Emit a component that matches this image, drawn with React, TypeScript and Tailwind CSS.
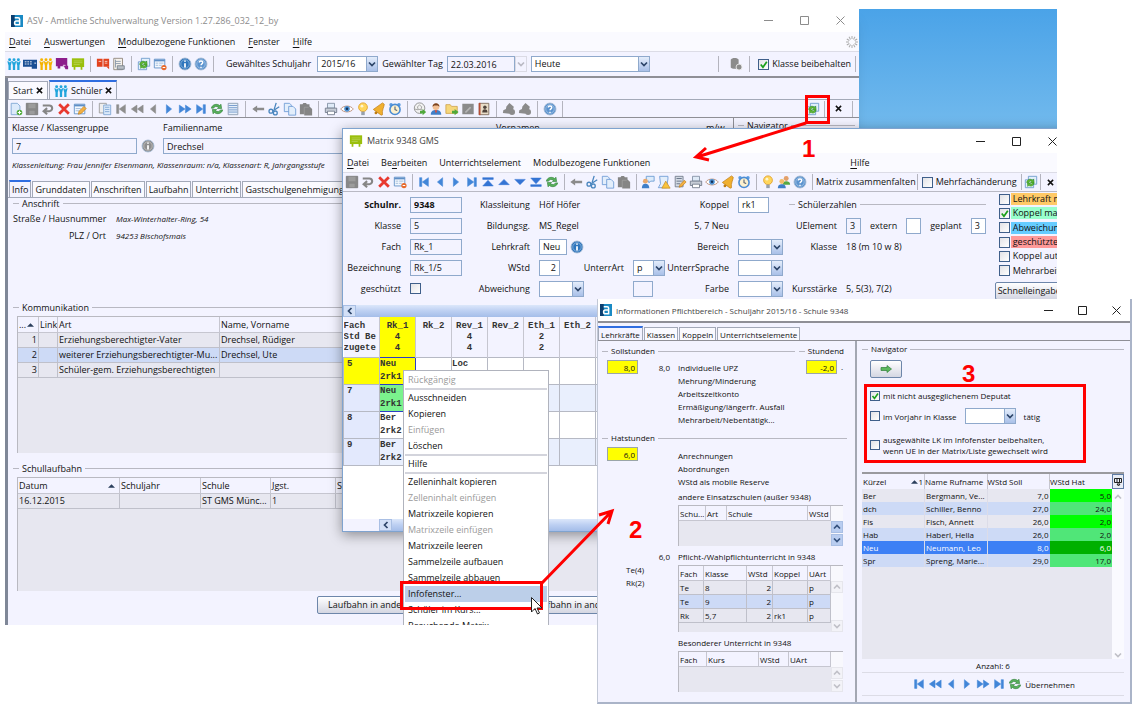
import React from 'react';
import clsx from 'clsx';

/* ---------- Icons ---------- */

const BLUE = '#4286d8';
const OFF = '#8e8e8e';

const people = (c: string) => (
  <g fill={c}>
    {[3, 8, 13].map((x) => (
      <g key={x}>
        <circle cx={x} cy="3.200" r="1.700" />
        <path d={`M${x - 2.6} 4.800l1.200 0 .8 1.200h1.200l.8-1.200 1.200 0-1.300 5v5h-2.600v-5z`} />
      </g>
    ))}
  </g>
);

const board = (c: string) => (
  <g>
    <path d="M1 1.500h14v10H1z" fill={c} />
    <path d="M3 4.500h10M3 6.500h10M3 8.500h7" stroke="#fff" strokeOpacity=".35" strokeWidth=".8" />
    <path d="M3 11h2v3.500H3zM11 11h2v3.500h-2z" fill={c} />
  </g>
);

const tri = (c: string, d: string) => <path d={d} fill={c} stroke={c} strokeWidth=".6" strokeLinejoin="round" />;

const round = (c: string, t: React.ReactNode) => (
  <g>
    <circle cx="8" cy="8" r="6.8" fill={c} stroke="#9fb6d0" strokeWidth="1" />
    <circle cx="8" cy="8" r="4.8" fill="none" stroke="#fff" strokeOpacity=".6" strokeWidth=".7" />
    {t}
  </g>
);

const iMark = <path d="M8 4v1.500M8 7v5" stroke="#fff" strokeWidth="2" />;
const qMark = <path d="M6 6.400C6 4 10 4 10 6.400 10 7.800 8 8 8 9.500M8 11v1.500" stroke="#fff" strokeWidth="1.600" fill="none" />;

const page = (c = '#dceafb', s = '#7ea6d4') => <path d="M2.500 1.500h7l3 3v10h-10z" fill={c} stroke={s} />;

const ICONS: Record<string, React.ReactNode> = {
  pupils: people('#22a5dc'),
  teachers: people('#f5b400'),
  rooms: (
    <g>
      <path d="M0 3h16v8H0zM10 11h6v2.500h-6z" fill="#1a4f94" />
      <path d="M2 5.500h9M2 8h9" stroke="#fff" strokeDasharray="2 1" />
      <path d="M13 7h2" stroke="#fff" />
    </g>
  ),
  courses: (
    <g>
      <path d="M1 1h13v9.500H1zM3 10h3v3H3zM10 10h5v4h-3z" fill="#8c1d8c" />
      <path d="M9 9.500h3" stroke="#fff" strokeWidth=".9" />
    </g>
  ),
  matrix: board('#9abf0c'),
  books: (
    <g>
      <path d="M1 2h6.500v9H1zM8.500 2H15v9H8.500z" fill="#e2431e" />
      <path d="M10 5h3M10 7h3M3 5h3" stroke="#fff" strokeWidth=".8" />
      <path d="M12 11l3 3v-3z" fill="#e2431e" />
    </g>
  ),
  report: (
    <g>
      <path d="M2 1.500h10v13H2z" fill="#f6f2ec" stroke="#8e857a" />
      <path d="M4 5h6M4 7.500h6M4 3v9" stroke="#8796a8" />
      <path d="M6 10h8v4H6z" fill="#b9bfc6" stroke="#76808a" />
    </g>
  ),
  sync: (
    <g>
      <path d="M5 1.500h9.500v9H5z" fill="#e2effb" stroke="#6d9acb" />
      <path d="M1.500 5.500H11v9H1.500z" fill="#e2effb" stroke="#6d9acb" />
      <path d="M3 8.500C4 4.500 7.500 4 9.500 6L11 4.500l.5 4.500H7.500L9 7.500C7.500 6.300 6 7 5.500 8.500z" fill="#62b832" stroke="#2f8f1d" strokeWidth=".7" />
      <path d="M11.500 9.500c-.5 3-4 4-6 2.200L4.300 13 4 9h3.500L6.500 10.300C8 11 9 10.500 9.500 9.500z" fill="#62b832" stroke="#2f8f1d" strokeWidth=".7" />
    </g>
  ),
  winRemove: (
    <g>
      <path d="M1.500 2.500h12v10h-12z" fill="#f3f8fe" stroke="#5f8fc6" />
      <path d="M1.500 3h12v2h-12z" fill="#5f8fc6" />
      <path d="M3 7h3M7 7h5M3 9.500h3M7 9.500h3" stroke="#9bb8d8" />
      <circle cx="12.500" cy="12" r="3" fill="#e86a2c" />
      <path d="M11 12h3" stroke="#fff" strokeWidth="1.200" />
    </g>
  ),
  info: round('#2f76bd', iMark),
  help: round('#5b93cf', qMark),
  infoOff: round('#8e8e8e', iMark),
  newDoc: (
    <g>
      {page()}
      <circle cx="12" cy="12" r="3.200" fill="#52ad3b" />
      <path d="M12 10v4M10 12h4" stroke="#fff" strokeWidth="1.200" />
    </g>
  ),
  save: (
    <g>
      <path d="M1.500 1.500h13v13h-13z" fill="#888" stroke="#7a7a7a" />
      <path d="M4 2h8v5H4zM5 10h6v4H5z" fill="#9c9c9c" />
    </g>
  ),
  undo: <path d="M2 4h7.500a3 3 0 0 1 0 6.500H4M7 7l-4 3.500L7 14" fill="none" stroke="#868686" strokeWidth="2.400" />,
  remove: <path d="M2.500 2.500l11 11M13.500 2.500l-11 11" stroke="#e8392f" strokeWidth="3.200" />,
  edit: (
    <g>
      <path d="M1.500 2.500h12v11h-12z" fill="#f3f8fe" stroke="#5f8fc6" />
      <path d="M1.500 3h12v2h-12z" fill="#5f8fc6" />
      <path d="M3 7.500h6M3 10h4" stroke="#9bb8d8" />
      <path d="M6 14l1-3.500L12.500 5 15 7.500 9.500 13z" fill="#f4b043" stroke="#c17f1c" strokeWidth=".8" />
    </g>
  ),
  sheets: (
    <g>
      <path d="M1.500 1.500h8v11h-8z" fill="#eee" stroke="#999" />
      <path d="M6.500 3.500h8v11h-8z" fill="#dceafa" stroke="#7ea6d4" />
      <path d="M8 6h5M8 8.500h5M8 11h5" stroke="#7ea6d4" />
    </g>
  ),
  first: tri(BLUE, 'M3 3h2.500v10H3zM13 3v10L6 8z'),
  firstOff: tri(OFF, 'M3 3h2.500v10H3zM13 3v10L6 8z'),
  rewind: tri(BLUE, 'M8 3.500v9L1.500 8zM15 3.500v9L8.500 8z'),
  rewindOff: tri(OFF, 'M8 3.500v9L1.500 8zM15 3.500v9L8.500 8z'),
  prev: tri(BLUE, 'M11 3v10L5 8z'),
  prevOff: tri(OFF, 'M11 3v10L5 8z'),
  next: tri(BLUE, 'M5 3v10l6-5z'),
  forward: tri(BLUE, 'M1.500 3.500v9L8 8zM8.500 3.500v9L15 8z'),
  last: tri(BLUE, 'M10.500 3H13v10h-2.500zM3 3v10l7-5z'),
  top: tri('#3474d4', 'M2 3h12v2H2zM2 12.500h12L8 6z'),
  up: tri('#3474d4', 'M2 11h12L8 5z'),
  down: tri('#3474d4', 'M2 5h12l-6 6z'),
  bottom: tri('#3474d4', 'M2 11h12v2H2zM2 3.500h12L8 10z'),
  refresh: (
    <g fill="#57b05a" stroke="#2f7f3a" strokeWidth=".7">
      <path d="M1.500 7C2.500 2.500 8 1.500 11 4l1.500-1.500.8 5H8.500l1.200-1.600C7.500 4.500 5 5 4 7z" />
      <path d="M14.500 9c-1 4.500-6.500 5.500-9.500 3l-1.500 1.500-.8-5h4.800L6.300 10.100C8.500 11.500 11 11 12 9z" />
    </g>
  ),
  list: (
    <g>
      <path d="M2.500 1.500h11v13h-11z" fill="#e6effa" stroke="#8a9bb0" />
      <path d="M3 4h10M3 6.500h10M3 9h10M3 11.500h10" stroke="#6c94c8" />
    </g>
  ),
  back: <path d="M15 6.500H7V4L1.500 8 7 12V9.500h8z" fill="#8b8b8b" />,
  cut: (
    <g fill="none" stroke="#4a86bf" strokeWidth="1.500">
      <path d="M10.500 1L8 9M14 5.500L7 10" />
      <circle cx="4.500" cy="10.500" r="2.200" />
      <circle cx="9.500" cy="12.500" r="2.200" />
    </g>
  ),
  copy: (
    <g fill="#e3eefb" stroke="#6f9cd6">
      <path d="M1.500 1.500h6l2 2v7.500h-8z" />
      <path d="M6.500 5h5l3 3v7h-8z" />
    </g>
  ),
  paste: (
    <g fill="#858585">
      <path d="M1 2.500h3L5 1h3l1 1.500h3V5l3 3v7.500H6V14H1z" />
      <path d="M6 14V6h5" fill="none" stroke="#a8a8a8" strokeWidth=".7" />
    </g>
  ),
  print: (
    <g>
      <path d="M4 1.500h8V7H4z" fill="#dfeaf7" stroke="#8291a5" />
      <path d="M1.500 7h13v5h-13z" fill="#c6ccd6" stroke="#727c8c" />
      <path d="M4 10.500h8v4H4z" fill="#fff" stroke="#727c8c" />
    </g>
  ),
  eye: (
    <g>
      <path d="M.8 8C4 3.500 12 3.500 15.200 8 12 12.500 4 12.500.8 8z" fill="#fff" stroke="#b98a74" />
      <circle cx="8" cy="7.800" r="3.200" fill="#4b8fd0" />
      <circle cx="8" cy="7.800" r="1.400" fill="#132f55" />
    </g>
  ),
  bulb: (
    <g>
      <circle cx="8" cy="6" r="5" fill="#ffd65c" stroke="#e0a02a" />
      <circle cx="6.800" cy="4.800" r="1.600" fill="#fff6cf" />
      <path d="M6 11h4v4H6z" fill="#97a0ab" />
    </g>
  ),
  bell: (
    <g>
      <path d="M12 1L1.500 8.500 3.500 10l7 5 1.500-.5c-1-5 2-9 2-12z" fill="#f0b030" stroke="#c07d12" strokeWidth=".8" />
      <circle cx="4.500" cy="12.500" r="1.600" fill="#c07d12" />
    </g>
  ),
  clock: (
    <g>
      <circle cx="3.500" cy="3" r="2" fill="#5a9be0" />
      <circle cx="12.500" cy="3" r="2" fill="#5a9be0" />
      <circle cx="8" cy="8.500" r="5.800" fill="#fdf1ce" stroke="#4b8cd4" strokeWidth="1.800" />
      <path d="M8 5v3.700l2.500 1" stroke="#4d5b70" fill="none" strokeWidth="1.200" />
    </g>
  ),
  ball: (
    <g>
      <circle cx="7.500" cy="7" r="6" fill="#f2f2f2" stroke="#8b8b8b" />
      <path d="M5 5.500l2.500-2 2.500 2-1 3H6zM2 8l4 1M9 8.500l3 1.500" fill="none" stroke="#9b9b9b" />
      <path d="M8 10h3V8l4 3.500-4 3.500v-2H8z" fill="#4fa93a" />
    </g>
  ),
  user: (
    <g>
      <path d="M2 14.500c0-4 2.500-5.500 6-5.500s6 1.500 6 5.500z" fill="#3f7fc8" />
      <path d="M6.500 9.500h3L8 13z" fill="#e24b35" />
      <circle cx="8" cy="5.500" r="3.800" fill="#f2bf94" />
      <path d="M4 5.500C4 0 12 0 12 5.500L10 4H6z" fill="#7b4320" />
    </g>
  ),
  users: (
    <g>
      <circle cx="10.500" cy="4" r="2.800" fill="#e3a06a" />
      <path d="M6.500 11c0-3 1.500-4 4-4s4.500 1 4.500 4z" fill="#55a843" />
      <circle cx="5.500" cy="7.500" r="2.800" fill="#f2bf6c" />
      <path d="M1 15c0-3.500 2-4.500 4.500-4.500S10 11.500 10 15z" fill="#3f7fc8" />
    </g>
  ),
  folder: (
    <g>
      <path d="M1 3h5l1.500 2H14v8H1z" fill="#f6d77c" stroke="#c9983a" strokeWidth=".8" />
      <path d="M8 10h3V8l4.500 3.500L11 15v-2H8z" fill="#4fa93a" />
    </g>
  ),
  editOff: (
    <g>
      <path d="M1.500 2h13v12h-13z" fill="#8b8b8b" />
      <path d="M5 12l6-6" stroke="#b5b5b5" strokeWidth="2" />
    </g>
  ),
  address: (
    <g>
      <path d="M2.500 1.500h11v13h-11z" fill="#e9ddc8" stroke="#7d6a5a" />
      <path d="M2 1h2v14H2z" fill="#b54d35" />
      <circle cx="9" cy="6" r="2" fill="#50443c" />
      <path d="M6 12c0-3 1-3.800 3-3.800s3 .8 3 3.800z" fill="#50443c" />
    </g>
  ),
  tagOff: (
    <g fill="#8b8b8b">
      <path d="M8.500 1l5 4.500-1 3.500-4 4.500L1 12.500l.5-3 3-1.500.5-3z" />
      <circle cx="11.500" cy="11.500" r="3.400" />
    </g>
  ),
  dbOff: (
    <g fill="#8b8b8b">
      <path d="M2 3c1-2.500 8-2.500 9 0v9c-1 2-8 2-9 0z" />
      <circle cx="11.500" cy="11.500" r="3.400" stroke="#eee" />
    </g>
  ),
  note: (
    <g>
      <path d="M6 1.500h9v5.500h-4l-2 2V7H6z" fill="#dcebfb" stroke="#6b9bd2" />
      <circle cx="5" cy="7" r="2.800" fill="#e9a86b" />
      <path d="M1 15c0-3.500 1.500-5 4-5s4.500 1.500 4.500 5z" fill="#3f7fc8" />
    </g>
  ),
  warn: (
    <g>
      <path d="M3 1.500h9.500v3L11 14.500H1.500L4 10z" fill="#e3eefb" stroke="#6f9cd6" />
      <path d="M10 7l5 8H5.500z" fill="#f9c33c" stroke="#c58a1a" strokeWidth=".8" />
    </g>
  ),
  calc: (
    <g>
      <path d="M2.500 1.500h9v12h-9z" fill="#d3dae4" stroke="#727c8c" />
      <path d="M4 4h6M4 7h6M4 10h4" stroke="#5f6c80" />
      <path d="M7 14l1-3 5-5 2 2-5 5z" fill="#f4b043" stroke="#c17f1c" strokeWidth=".8" />
    </g>
  ),
};

const Icon = ({ name, className = 'size-3.5' }: { name: string; className?: string }) => (
  <svg viewBox="0 0 16 16" className={clsx('shrink-0', className)} aria-hidden="true">
    {ICONS[name]}
  </svg>
);

const Logo = () => (
  <svg viewBox="0 0 16 16" className="size-3 shrink-0" aria-hidden="true">
    <path d="M0 0h16v16H0z" fill="#1a8ac4" />
    <path d="M0 0h5v16H0z" fill="#0c3f70" />
    <path d="M5 3.500h4.500c1.500 0 2 .8 2 2V13H7.200C5.500 13 4.800 12 4.800 10.500S5.500 8 7.200 8h4" fill="none" stroke="#fff" strokeWidth="2" />
  </svg>
);

const Chevron = ({ dir = 'down' }: { dir?: 'down' | 'up' | 'left' }) => (
  <svg viewBox="0 0 8 8" className="size-2" aria-hidden="true">
    <path
      d={{ down: 'M1 2.500l3 3 3-3', up: 'M1 5.500l3-3 3 3', left: 'M5.500 1l-3 3 3 3' }[dir]}
      fill="none"
      stroke="currentColor"
      strokeWidth="1.700"
    />
  </svg>
);

/* ---------- Building blocks ---------- */

const Sep = () => <span className="h-4 w-px shrink-0 bg-[#b4b4be]" />;

const ToolIcons = ({ items, sep = 'w-[9px]' }: { items: string; sep?: string }) => (
  <>
    {items.split(' ').map((name, i) =>
      name === '|' ? (
        <span key={i} className={clsx('flex shrink-0 justify-center', sep)}>
          <Sep />
        </span>
      ) : (
        <button key={i} type="button" aria-label={name} className="flex w-4 shrink-0 justify-center">
          <Icon name={name} />
        </button>
      )
    )}
  </>
);

const WindowButtons = ({ className = '', gap = 'gap-[27px]' }: { className?: string; gap?: string }) => (
  <div className={clsx('ml-auto flex items-center', gap, className)}>
    {['M0 4.500h9', 'M.5 .5h8v8h-8z', 'M.5 .5l8 8M8.500 .5l-8 8'].map((d, i) => (
      <button key={d} type="button" aria-label={['Minimieren', 'Maximieren', 'Schließen'][i]}>
        <svg viewBox="0 0 9 9" className="size-[9px] overflow-visible" fill="none" stroke="currentColor">
          <path d={d} />
        </svg>
      </button>
    ))}
  </div>
);

// the underlined letter is the keyboard mnemonic
const MenuItem = ({ text, at = 0, className = '' }: { text: string; at?: number; className?: string }) => (
  <button type="button" className={className}>
    {at < 0 ? text : (
      <>
        {text.slice(0, at)}
        <span className="underline underline-offset-2">{text[at]}</span>
        {text.slice(at + 1)}
      </>
    )}
  </button>
);

const Legend = ({ text, className = '' }: { text: string; className?: string }) => (
  <div className={clsx('flex h-2.5 items-center gap-[3px] leading-none', className)}>
    <span className="h-px w-[6px] bg-[#b8b8c2]" />
    <span>{text}</span>
    <span className="h-px flex-1 bg-[#b8b8c2]" />
  </div>
);

const Field = ({ id, label, value = '', className = '' }: { id?: string; label?: string; value?: string; className?: string }) => (
  <input
    id={id}
    aria-label={label}
    defaultValue={value}
    className={clsx('h-4 border border-[#8fa9cc] px-[3px] outline-none', className)}
  />
);

const Combo = ({
  id, label, value = '', className = '',
}: { id?: string; label?: string; value?: string; className?: string }) => (
  <div className={clsx('relative h-4 shrink-0', className)}>
    <select id={id} aria-label={label} className="h-full w-full appearance-none border border-[#8fa9cc] bg-white pl-[3px] outline-none">
      <option>{value}</option>
    </select>
    <span className="pointer-events-none absolute inset-y-0 right-0 flex w-3 items-center justify-center border border-[#8fa9cc] bg-linear-to-b from-[#e4edfb] to-[#a9c0e8] text-[#2c4468]">
      <Chevron />
    </span>
  </div>
);

const Check = ({
  label, checked = false, className = '', box = 'size-[11px]', textClass = '',
}: { label: React.ReactNode; checked?: boolean; className?: string; box?: string; textClass?: string }) => (
  <label className={clsx('flex items-center whitespace-nowrap', className)}>
    <span className={clsx('relative shrink-0', box)}>
      <input
        type="checkbox"
        defaultChecked={checked}
        className="peer block size-full appearance-none border border-[#3f5f8a] bg-linear-to-br from-[#e2e2e6] to-white"
      />
      <svg viewBox="0 0 10 10" className="pointer-events-none absolute inset-0 size-full opacity-0 peer-checked:opacity-100" aria-hidden="true">
        <path d="M2.500 5l2 2.500 3.500-5" fill="none" stroke="#1ca01c" strokeWidth="1.600" />
      </svg>
    </span>
    <span className={textClass}>{label}</span>
  </label>
);

const Tab = ({ text, active = false, icon, close = false }: { text: string; active?: boolean; icon?: string; close?: boolean }) => (
  <button
    type="button"
    role="tab"
    aria-selected={active}
    className={clsx(
      'flex shrink-0 items-center gap-[3px] self-stretch border border-b-0 border-[#a3a9b8] whitespace-nowrap',
      close ? 'px-1' : 'px-0.5',
      active ? 'border-t-2 border-t-[#2f6de0] bg-[#f3f3ff]' : 'mt-px bg-[#fafaff]'
    )}
  >
    {icon && <Icon name={icon} />}
    {text}
    {close && (
      <svg viewBox="0 0 8 8" className="size-[7px]" aria-hidden="true">
        <path d="M1 1l6 6M7 1L1 7" stroke="#111" strokeWidth="1.700" />
      </svg>
    )}
  </button>
);

const Cross = () => (
  <button type="button" aria-label="Schließen">
    <svg viewBox="0 0 8 8" className="size-[7px]">
      <path d="M1 1l6 6M7 1L1 7" stroke="#111" strokeWidth="1.700" />
    </svg>
  </button>
);

const SortMark = () => (
  <svg viewBox="0 0 8 4" className="h-1 w-[7px]" aria-hidden="true">
    <path d="M0 4l4-4 4 4z" fill="#2b3f5c" />
  </svg>
);

interface GridColumn {
  title: React.ReactNode;
  width: string;
  right?: boolean;
}

interface DataGridProps {
  columns: GridColumn[];
  rows: string[][];
  rowHeight: string;
  headHeight: string;
  className?: string;
  scroll?: 'blue' | 'off';
}

const DataGrid = ({ columns, rows, rowHeight, headHeight, className = '', scroll }: DataGridProps) => (
  <div className={clsx('flex border-t border-l border-[#b9b9c1] bg-[#e7e7f0]', className)}>
    <div className="min-w-0 flex-1">
      <table className="w-full table-fixed border-separate border-spacing-0">
        <thead>
          <tr className={clsx('bg-[#f3f3ff]', headHeight)}>
            {columns.map((c, i) => (
              <th key={i} className={clsx('overflow-hidden border-r border-b border-[#c6c6d0] pl-px text-left font-normal whitespace-nowrap', c.width)}>
                {c.title}
              </th>
            ))}
          </tr>
        </thead>
        <tbody>
          {rows.map((row, r) => (
            <tr key={r} className={clsx(rowHeight, r % 2 ? 'bg-[#cddaf6]' : 'bg-[#e7e7f0]')}>
              {row.map((cell, i) => (
                <td key={i} className={clsx('overflow-hidden border-r border-b border-[#bfc0ca] px-px whitespace-nowrap', columns[i].right && 'text-right')}>
                  {cell}
                </td>
              ))}
            </tr>
          ))}
        </tbody>
      </table>
    </div>
    {scroll && (
      <div className={clsx('flex w-3 shrink-0 flex-col justify-between bg-[#f8f8fd] pt-[15px]', scroll === 'off' ? 'text-[#c0c0c8]' : 'text-[#33507c]')}>
        {(['up', 'down'] as const).map((dir) => (
          <button
            key={dir}
            type="button"
            aria-label={dir}
            className={clsx('flex h-3 items-center justify-center border', scroll === 'off' ? 'border-[#e6e6ec] bg-[#f3f3f8]' : 'border-[#a9bfe4] bg-[#b9cdf0]')}
          >
            <Chevron dir={dir} />
          </button>
        ))}
      </div>
    )}
  </div>
);

/* ---------- Main window ---------- */

const contacts = [
  ['1', '', 'Erziehungsberechtigter-Vater', 'Drechsel, Rüdiger'],
  ['2', '', 'weiterer Erziehungsberechtigter-Mu...', 'Drechsel, Ute'],
  ['3', '', 'Schüler-gem. Erziehungsberechtigten', ''],
];

const raised = 'rounded-[2px] border border-[#6d86aa] bg-linear-to-b from-white to-[#d4d6e2] whitespace-nowrap';

const MainWindow = () => (
  <section className="absolute inset-y-0 left-0 flex w-[854px] flex-col bg-[#f3f3ff] shadow-lg">
    <header className="flex h-[23px] items-center gap-1 bg-white pl-1.5 text-[#8c8c8c]">
      <Logo />
      <h1>ASV - Amtliche Schulverwaltung Version 1.27.286_032_12_by</h1>
      <WindowButtons className="pr-3.5" />
    </header>
    <nav className="flex h-[19px] items-center gap-[13px] bg-[#fafaff] pl-1">
      <MenuItem text="Datei" />
      <MenuItem text="Auswertungen" />
      <MenuItem text="Modulbezogene Funktionen" />
      <MenuItem text="Fenster" />
      <MenuItem text="Hilfe" />
      <svg viewBox="0 0 12 12" className="mr-px ml-auto size-3" aria-hidden="true">
        {[0, 30, 60, 90, 120, 150, 180, 210, 240, 270, 300, 330].map((a) => (
          <path key={a} d="M6 0v3" stroke="#aaa" transform={`rotate(${a} 6 6)`} />
        ))}
      </svg>
    </nav>
    <div className="flex h-[27px] items-center border-t border-b-2 border-t-[#dcdce6] border-b-[#8f8f96] pl-px">
      <ToolIcons items="pupils rooms teachers courses matrix | books report | sync winRemove | info help |" />
      <label htmlFor="schuljahr" className="mr-1.5 ml-2">Gewähltes Schuljahr</label>
      <Combo id="schuljahr" value="2015/16" className="w-[61px]" />
      <label htmlFor="tag" className="mx-1">Gewählter Tag</label>
      <Field id="tag" value="22.03.2016" className="w-[68px] bg-[#f3f3ff]" />
      <span className="flex h-4 w-3 items-center justify-center border border-[#dadae4] text-[#b9b9c4]">
        <Chevron />
      </span>
      <Combo label="Tag" value="Heute" className="ml-1 w-[119px]" />
      <div className="ml-auto flex items-center pr-[3px]">
        <Sep />
        <button type="button" aria-label="Datenbank" className="pr-1.5 pl-2.5"><Icon name="dbOff" /></button>
        <Sep />
        <Check label="Klasse beibehalten" checked className="mr-1 ml-2" textClass="ml-[3px]" />
        <Sep />
      </div>
    </div>

    <div className="flex flex-1 flex-col border-l-3 border-[#7f8797]">
      <div role="tablist" className="flex h-[21px] gap-px pt-0.5">
        <Tab text="Start" close />
        <Tab text="Schüler" icon="pupils" close active />
      </div>
      <div className="flex h-[19px] items-center border-y border-t-[#a3a9b8] border-b-[#8f8f96]">
        <ToolIcons items="newDoc save undo remove edit | sheets firstOff rewindOff prevOff next forward last refresh list | back cut copy paste | print eye bulb bell clock | ball user folder editOff address | tagOff tagOff | help |" />
        <div className="ml-auto flex items-center pr-1.5">
          <button type="button" aria-label="Infofenster" className="pr-1"><Icon name="sync" /></button>
          <Sep />
          <span className="flex px-2.5"><Cross /></span>
          <Sep />
        </div>
      </div>

      <div className="flex flex-1 gap-1">
        <div className="min-w-0 flex-1 pt-[3px]">
          <div className="grid grid-cols-[125px_18px_329px_206px_1fr] gap-x-[4px] gap-y-[3px] pl-1">
            <label htmlFor="klasse" className="whitespace-nowrap">Klasse / Klassengruppe</label>
            <span />
            <label htmlFor="familienname">Familienname</label>
            <label htmlFor="vornamen">Vornamen</label>
            <span>m/w</span>
            <Field id="klasse" value="7" className="bg-[#f3f3ff]" />
            <button type="button" aria-label="Info" className="flex items-center">
              <Icon name="infoOff" />
            </button>
            <Field id="familienname" value="Drechsel" className="bg-[#f3f3ff]" />
            <Field id="vornamen" className="bg-[#f3f3ff]" />
          </div>
          <p className="mt-1 h-3.5 pl-1 text-[8px] whitespace-nowrap italic">
            Klassenleitung: Frau Jennifer Eisenmann, Klassenraum: n/a, Klassenart: R, Jahrgangsstufe
          </p>
          <div role="tablist" className="mt-2 flex h-[18px] gap-px border-b border-[#a3a9b8] pl-px">
            <Tab text="Info" active />
            <Tab text="Grunddaten" />
            <Tab text="Anschriften" />
            <Tab text="Laufbahn" />
            <Tab text="Unterricht" />
            <Tab text="Gastschulgenehmigung" />
          </div>

          <div className="px-[5px]">
            <Legend text="Anschrift" />
            <dl className="grid auto-rows-[17px] grid-cols-[93px_1fr] items-center gap-x-2.5 pt-0.5">
              <dt className="text-right whitespace-nowrap">Straße / Hausnummer</dt>
              <dd className="text-[8px] italic">Max-Winterhalter-Ring, 54</dd>
              <dt className="text-right">PLZ / Ort</dt>
              <dd className="text-[8px] italic">94253 Bischofsmais</dd>
            </dl>
            <Legend text="Kommunikation" className="mt-[58px]" />
            <DataGrid
              className="mt-1 ml-1 h-[137px]"
              headHeight="h-4"
              rowHeight="h-[15px]"
              columns={[
                { title: <span className="flex items-center justify-between pr-1">...<SortMark /></span>, width: 'w-[21px]', right: true },
                { title: 'Link', width: 'w-[19px]' },
                { title: 'Art', width: 'w-[162px]' },
                { title: 'Name, Vorname', width: 'w-auto' },
              ]}
              rows={contacts}
            />
            <Legend text="Schullaufbahn" className="mt-2.5" />
            <DataGrid
              className="mt-1 ml-1 h-[114px]"
              headHeight="h-4"
              rowHeight="h-[15px]"
              columns={[
                { title: <span className="flex items-center justify-between pr-1">Datum<SortMark /></span>, width: 'w-[102px]' },
                { title: 'Schuljahr', width: 'w-[81px]' },
                { title: 'Schule', width: 'w-[70px]' },
                { title: 'Jgst.', width: 'w-[65px]' },
                { title: 'Schulart', width: 'w-auto' },
              ]}
              rows={[['16.12.2015', '', 'ST GMS Münc...', '1', '']]}
            />
            <div className="mt-[5px] flex gap-1 pl-[304px]">
              <button type="button" className={clsx(raised, 'h-[18px] w-[200px] pl-2.5 text-left')}>Laufbahn in anderen Schulen</button>
              <button type="button" className={clsx(raised, 'h-[18px] w-[200px] pl-2.5 text-left')}>Laufbahn in anderen Ländern</button>
            </div>
          </div>
        </div>
        <div className="mr-1 w-[122px] border-l border-[#8f8f96] pt-0.5 pl-1">
          <Legend text="Navigator" />
        </div>
      </div>
    </div>
  </section>
);

/* ---------- Matrix window ---------- */

const markers = [
  { label: 'Lehrkraft markieren', color: 'bg-[#ffc966]' },
  { label: 'Koppel markieren', color: 'bg-[#99ffcc]', checked: true },
  { label: 'Abweichung', color: 'bg-[#66ccff]' },
  { label: 'geschützte UE', color: 'bg-[#ff9999]' },
  { label: 'Koppel automatisch', color: '' },
  { label: 'Mehrarbeit', color: '' },
];

const matrixHead = [
  ['Rk_1', '4', '4'], ['Rk_2'], ['Rev_1', '4', '4'], ['Rev_2'], ['Eth_1', '2', '2'], ['Eth_2'], ['Spo'],
];
const matrixRows = [
  { no: '5', cells: [['Neu', '2rk1'], [], ['Loc'], [], [], [], []] },
  { no: '7', cells: [['Neu', '2rk1'], [], [], [], [], [], []] },
  { no: '8', cells: [['Ber', '2rk2'], [], [], [], [], [], []] },
  { no: '9', cells: [['Ber', '2rk2'], [], [], [], [], [], []] },
];

const ScrollRow = ({ className = '' }: { className?: string }) => (
  <div className={clsx('flex h-3 w-full', className)}>
    <button type="button" aria-label="Nach links" className="flex w-[13px] shrink-0 items-center justify-center border border-[#a9bfe4] bg-[#d3e0f7] text-[#2c4468]">
      <Chevron dir="left" />
    </button>
    <span className="flex-1 bg-linear-to-b from-[#dce7fa] via-[#bccff2] to-[#a4bde9]" />
  </div>
);

const FormLabel = ({ htmlFor, children, className = '' }: { htmlFor?: string; children: React.ReactNode; className?: string }) => (
  <label htmlFor={htmlFor} className={clsx('flex justify-end', className)}>{children}</label>
);

const MatrixWindow = () => (
  <section className="absolute top-[119px] left-[337px] flex h-[404px] w-[736px] flex-col border border-[#7fa3cf] bg-[#f3f3ff] whitespace-nowrap shadow-[0_3px_12px_rgba(0,0,0,0.4)]">
    <header className="flex h-6 shrink-0 items-center gap-1 bg-white pl-1.5 text-[#444]">
      <Icon name="matrix" />
      <h2>Matrix 9348 GMS</h2>
      <WindowButtons className="pr-5 text-[#222]" />
    </header>
    <nav className="flex h-[19px] shrink-0 items-center gap-3 bg-[#fafaff] pl-1">
      <MenuItem text="Datei" />
      <MenuItem text="Bearbeiten" at={2} />
      <MenuItem text="Unterrichtselement" at={-1} />
      <MenuItem text="Modulbezogene Funktionen" at={-1} />
      <MenuItem text="Hilfe" className="ml-[188px]" />
    </nav>
    <div className="flex h-5 shrink-0 items-center border-y border-t-[#dcdce6] border-b-[#b9b9c4] pl-px">
      <ToolIcons
        sep="w-[8px]"
        items="save undo remove winRemove | first prev next last top up down bottom refresh | back cut copy paste | note warn calc print eye bell clock | bulb users help |"
      />
      <button type="button" className="pr-px">Matrix zusammenfalten</button>
      <Sep />
      <Check label="Mehrfachänderung" className="mx-1" textClass="ml-[3px]" />
      <Sep />
      <button type="button" aria-label="Infofenster" className="mx-0.5"><Icon name="sync" /></button>
      <Sep />
      <span className="ml-1.5 flex"><Cross /></span>
    </div>

    <div className="flex shrink-0">
      <div className="grid auto-rows-[21px] grid-cols-[58px_52px_59px_36px_40px_32px_55px_45px] items-center gap-x-[9px] pt-0.5">
        <FormLabel htmlFor="schulnr" className="font-bold">Schulnr.</FormLabel>
        <Field id="schulnr" value="9348" className="w-full bg-[#f3f3ff] font-bold" />
        <FormLabel>Klassleitung</FormLabel>
        <span>Höf Höfer</span>
        <span />
        <span />
        <FormLabel htmlFor="koppel">Koppel</FormLabel>
        <Field id="koppel" value="rk1" className="w-[31px] bg-white" />

        <FormLabel htmlFor="m-klasse">Klasse</FormLabel>
        <Field id="m-klasse" value="5" className="w-full bg-[#f3f3ff]" />
        <FormLabel>Bildungsg.</FormLabel>
        <span>MS_Regel</span>
        <span />
        <span />
        <FormLabel>5, 7 Neu</FormLabel>
        <span />

        <FormLabel htmlFor="fach">Fach</FormLabel>
        <Field id="fach" value="Rk_1" className="w-full bg-[#f3f3ff]" />
        <FormLabel htmlFor="lehrkraft">Lehrkraft</FormLabel>
        <div className="flex items-center gap-[3px]">
          <Field id="lehrkraft" value="Neu" className="w-7 shrink-0 bg-white" />
          <Icon name="info" />
        </div>
        <span />
        <span />
        <FormLabel htmlFor="bereich">Bereich</FormLabel>
        <Combo id="bereich" className="w-[45px]" />

        <FormLabel htmlFor="bezeichnung">Bezeichnung</FormLabel>
        <Field id="bezeichnung" value="Rk_1/5" className="w-full bg-[#f3f3ff]" />
        <FormLabel htmlFor="wstd">WStd</FormLabel>
        <Field id="wstd" value="2" className="w-[21px] bg-white text-right" />
        <FormLabel htmlFor="unterrart">UnterrArt</FormLabel>
        <Combo id="unterrart" value="p" className="w-8" />
        <FormLabel htmlFor="sprache">UnterrSprache</FormLabel>
        <Combo id="sprache" className="w-[45px]" />

        <FormLabel htmlFor="geschuetzt">geschützt</FormLabel>
        <input id="geschuetzt" type="checkbox" className="size-[11px] appearance-none border border-[#3f5f8a] bg-linear-to-br from-[#e2e2e6] to-white" />
        <FormLabel htmlFor="abweichung">Abweichung</FormLabel>
        <Combo id="abweichung" className="w-[45px]" />
        <span />
        <Field label="Abweichung Wert" className="w-5 bg-[#f3f3ff]" />
        <FormLabel htmlFor="farbe">Farbe</FormLabel>
        <Combo id="farbe" className="w-[45px]" />
      </div>

      <div className="ml-1.5 grid w-[203px] auto-rows-[21px] items-center pt-0.5">
        <Legend text="Schülerzahlen" />
        <div className="flex items-center gap-[9px]">
          <FormLabel htmlFor="uelement" className="w-12">UElement</FormLabel>
          <Field id="uelement" value="3" className="w-[15px] bg-[#f3f3ff]" />
          <label htmlFor="extern">extern</label>
          <Field id="extern" className="w-[15px] bg-white" />
          <label htmlFor="geplant">geplant</label>
          <Field id="geplant" value="3" className="w-[15px] bg-white" />
        </div>
        <div className="flex gap-[9px]">
          <span className="w-12 text-right">Klasse</span>
          <span>18 (m 10 w 8)</span>
        </div>
        <span />
        <div className="flex gap-[9px]">
          <span className="flex w-12 justify-end">Kursstärke</span>
          <span>5, 5(3), 7(2)</span>
        </div>
      </div>

      <div className="ml-[9px] flex flex-1 flex-col">
        <div className="grid h-[86px] grid-rows-6 pl-1">
          {markers.map((m) => (
            <Check
              key={m.label}
              label={m.label}
              checked={m.checked}
              textClass={clsx('ml-px flex h-3 flex-1 items-center overflow-hidden pl-0.5', m.color)}
            />
          ))}
        </div>
        <button type="button" className={clsx(raised, 'mt-1 h-[18px] pl-0.5 text-left')}>Schnelleingabe</button>
      </div>
    </div>

    <ScrollRow className="mt-[5px] shrink-0" />
    <div className="flex-1 overflow-hidden bg-white">
      <table className="table-fixed border-collapse font-['Liberation_Mono',monospace] text-[9px] font-bold text-[#333]">
        <thead>
          <tr className="h-10 bg-[#f3f3ff] align-top leading-[11px]">
            <th className="w-9 border-r border-[#c6c6d0] text-left">
              <div className="w-[35px] overflow-hidden pt-1">Fach<br />Std Be<br />zugete</div>
            </th>
            {matrixHead.map((col, i) => (
              <th key={i} className={clsx('w-9 border-r border-[#c6c6d0] pt-1', i === 0 && 'bg-[#ffff00]')}>
                {col.map((line, n) => <div key={n} className="w-[35px]">{line}</div>)}
              </th>
            ))}
          </tr>
        </thead>
        <tbody>
          {matrixRows.map((row, r) => (
            <tr key={row.no} className={clsx('h-[27px] align-top leading-[13px]', r % 2 ? 'bg-[#e9effd]' : 'bg-white')}>
              <th className={clsx('border border-[#b6b9c4] pl-[3px] text-left', r === 0 ? 'bg-[#ffff00]' : 'bg-[#e3e9fd]')}>{row.no}</th>
              {row.cells.map((cell, c) => (
                <td
                  key={c}
                  className={clsx(
                    'border border-[#b6b9c4]',
                    c === 0 && r === 0 && 'border-[#2c3fc4]! bg-[#ffff00]',
                    c === 0 && r === 1 && 'border-[#2c3fc4]! bg-[#7bf28d]'
                  )}
                >
                  {cell.map((line) => <div key={line}>{line}</div>)}
                </td>
              ))}
            </tr>
          ))}
        </tbody>
      </table>
    </div>
    <ScrollRow className="shrink-0 pl-9" />
  </section>
);

/* ---------- Context menu ---------- */

const menuGroups = [
  ['-Rückgängig'],
  ['Ausschneiden', 'Kopieren', '-Einfügen', 'Löschen'],
  ['Hilfe'],
  [
    'Zelleninhalt kopieren', '-Zelleninhalt einfügen', 'Matrixzeile kopieren', '-Matrixzeile einfügen', 'Matrixzeile leeren',
    'Sammelzeile aufbauen', 'Sammelzeile abbauen', 'Infofenster...', 'Schüler im Kurs...', 'Besuchende Matrix...',
  ],
];

const ContextMenu = () => (
  <div role="menu" className="absolute top-[361px] left-[398px] w-[146px] border border-[#b0b3bd] bg-white p-px">
    {menuGroups.map((group, g) => (
      <div key={g} className={clsx(g > 0 && 'border-t-2 border-[#d3d4dc]')}>
        {group.map((entry) => {
          const off = entry.startsWith('-');
          return (
            <button
              key={entry}
              type="button"
              role="menuitem"
              disabled={off}
              className={clsx(
                'flex h-4 w-full items-center pl-[3px]',
                off ? 'text-[#9a9a9a]' : 'text-[#111]',
                entry === 'Infofenster...' && 'bg-[#bccfe9]'
              )}
            >
              {off ? entry.slice(1) : entry}
            </button>
          );
        })}
      </div>
    ))}
  </div>
);

/* ---------- Info window ---------- */

const lessons = [
  ['Te', '8', '2', '', 'p'],
  ['Te', '9', '2', '', 'p'],
  ['Rk', '5,7', '2', 'rk1', 'p'],
];

const teachers = [
  { id: 'Ber', name: 'Bergmann, Ve...', soll: '7,0', hat: '5,0' },
  { id: 'dch', name: 'Schiller, Benno', soll: '27,0', hat: '24,0' },
  { id: 'Fis', name: 'Fisch, Annett', soll: '26,0', hat: '2,0' },
  { id: 'Hab', name: 'Haberl, Hella', soll: '26,0', hat: '2,0' },
  { id: 'Neu', name: 'Neumann, Leo', soll: '8,0', hat: '6,0' },
  { id: 'Spr', name: 'Spreng, Marie...', soll: '29,0', hat: '17,0' },
];

const Hours = ({ value, label }: { value: string; label: string }) => (
  <input
    aria-label={label}
    readOnly
    value={value}
    className="h-3.5 w-[31px] shrink-0 border border-[#9aa5a8] bg-[#ffff00] px-0.5 text-right outline-none"
  />
);

const TeacherTable = () => (
  <div className="flex h-[187px] border-t-2 border-[#9a9a9e] bg-[#e7e7f0]">
    <table className="w-full table-fixed self-start">
      <thead>
        <tr className="h-[15px] bg-[#f3f3ff] text-left">
          <th className="w-[25%] px-px font-normal">
            <span className="flex items-center justify-between">
              Kürzel
              <span className="flex items-center"><SortMark />1</span>
            </span>
          </th>
          <th className="w-[25%] border-l border-[#c6c6d0] font-normal">Name Rufname</th>
          <th className="w-[25%] border-l border-[#c6c6d0] font-normal">WStd Soll</th>
          <th className="w-[25%] border-l border-[#c6c6d0] font-normal">WStd Hat</th>
        </tr>
      </thead>
      <tbody>
        {teachers.map((t, i) => {
          const selected = t.id === 'Neu';
          return (
            <tr key={t.id} className={clsx('h-[13px]', selected ? 'bg-[#3d80f5] text-white' : i % 2 ? 'bg-[#cddaf6]' : 'bg-[#e7e7f0]')}>
              <td className="px-px">{t.id}</td>
              <td className="border-l border-[#dcdce8] px-px">{t.name}</td>
              <td className="border-l border-[#dcdce8] pr-px text-right">{t.soll}</td>
              <td className={clsx('pr-px text-right', selected ? 'bg-[#00b000]' : i % 2 ? 'bg-[#50e678]' : 'bg-[#00ff00]')}>{t.hat}</td>
            </tr>
          );
        })}
      </tbody>
    </table>
    <div className="flex w-3 shrink-0 flex-col items-center bg-[#fafaff] text-[#c0c0c8]">
      <button type="button" aria-label="Spalten" className="mb-1 flex h-[15px] w-3 items-center justify-center border border-[#5f7ba5] bg-[#e9edf6]">
        <svg viewBox="0 0 8 8" className="size-2" aria-hidden="true">
          <path d="M.5 .5h7v4h-7zM3 .5v4M5.500 .5v4M3 6h3L4.500 8z" fill="none" stroke="#222" />
        </svg>
      </button>
      <Chevron dir="up" />
      <span className="flex-1" />
      <Chevron />
    </div>
  </div>
);

const InfoWindow = () => (
  <section className="absolute top-[299px] right-[10px] left-[597px] border-r-2 border-b-2 border-l border-[#aab4c8] border-l-[#c2c8d6] bg-[#f3f3ff] text-[8px] leading-[13px] whitespace-nowrap">
    <header className="flex h-[22px] items-center gap-1 bg-white pl-0.5 text-[#444]">
      <Logo />
      <h2>Informationen Pflichtbereich - Schuljahr 2015/16 - Schule 9348</h2>
      <WindowButtons gap="gap-[25px]" className="pr-[9px] text-[#222]" />
    </header>
    <div role="tablist" className="flex h-5 gap-px border-t-2 border-b border-t-[#8f8f96] border-b-[#8f8f96] pt-[3px]">
      <Tab text="Lehrkräfte" active />
      <Tab text="Klassen" />
      <Tab text="Koppeln" />
      <Tab text="Unterrichtselemente" />
    </div>
    <div className="flex">
      <div className="w-[259px] shrink-0 border-r-2 border-[#a3a7b2] pt-[5px] pb-2.5 pl-1">
        <div className="flex gap-1 pr-2">
          <Legend text="Sollstunden" className="w-[196px]" />
          <Legend text="Stundend" className="flex-1" />
        </div>
        <div className="mt-1 flex pl-[5px]">
          <Hours label="Sollstunden" value="8,0" />
          <span className="w-8 pt-px text-right">8,0</span>
          <ul className="w-[128px] pt-px pl-2">
            <li>Individuelle UPZ</li>
            <li>Mehrung/Minderung</li>
            <li>Arbeitszeitkonto</li>
            <li>Ermäßigung/längerfr. Ausfall</li>
            <li>Mehrarbeit/Nebentätigk...</li>
          </ul>
          <span className="ml-2 flex gap-1">
            <Hours label="Stundendifferenz" value="-2,0" />.
          </span>
        </div>
        <Legend text="Hatstunden" className="mt-[7px] mr-2" />
        <div className="mt-1 flex gap-2 pl-[5px]">
          <div className="w-[63px]">
            <Hours label="Hatstunden" value="6,0" />
          </div>
          <div className="w-[165px] pt-0.5">
            <p>Anrechnungen</p>
            <p>Abordnungen</p>
            <p>WStd als mobile Reserve</p>
            <p className="mt-0.5">andere Einsatzschulen (außer 9348)</p>
            <DataGrid
              className="mt-0.5 h-[41px]"
              headHeight="h-[15px]"
              rowHeight="h-[13px]"
              scroll="blue"
              columns={[
                { title: 'Schu...', width: 'w-[27px]' },
                { title: 'Art', width: 'w-[21px]' },
                { title: 'Schule', width: 'w-auto' },
                { title: 'WStd', width: 'w-[23px]' },
              ]}
              rows={[]}
            />
          </div>
        </div>
        <div className="mt-1 flex gap-2 pl-[5px]">
          <div className="w-[63px]">
            <p className="text-right">6,0</p>
            <p className="pl-[19px]">Te(4)</p>
            <p className="pl-[19px]">Rk(2)</p>
          </div>
          <div className="w-[165px]">
            <p>Pflicht-/Wahlpflichtunterricht in 9348</p>
            <DataGrid
              className="mt-0.5 h-[67px]"
              headHeight="h-[15px]"
              rowHeight="h-[13px]"
              scroll="off"
              columns={[
                { title: 'Fach', width: 'w-[25px]' },
                { title: 'Klasse', width: 'w-[43px]' },
                { title: 'WStd', width: 'w-[26px]', right: true },
                { title: 'Koppel', width: 'w-[35px]' },
                { title: 'UArt', width: 'w-[23px]' },
              ]}
              rows={lessons}
            />
            <p className="mt-1">Besonderer Unterricht in 9348</p>
            <DataGrid
              className="mt-0.5 h-[41px]"
              headHeight="h-[15px]"
              rowHeight="h-[13px]"
              scroll="off"
              columns={[
                { title: 'Fach', width: 'w-[28px]' },
                { title: 'Kurs', width: 'w-[52px]' },
                { title: 'WStd', width: 'w-[30px]' },
                { title: 'UArt', width: 'w-auto' },
              ]}
              rows={[]}
            />
          </div>
        </div>
      </div>

      <div className="flex-1 pt-[3px] pr-1.5 pl-[5px]">
        <Legend text="Navigator" />
        <button type="button" aria-label="Übertragen" className={clsx(raised, 'mt-1.5 ml-2 flex h-[18px] w-8 items-center justify-center')}>
          <svg viewBox="0 0 12 8" className="h-2 w-3" aria-hidden="true">
            <path d="M1 2.500h6V.5L11.500 4 7 7.500v-2H1z" fill="#5cb85c" stroke="#2f7f3a" strokeWidth=".7" />
          </svg>
        </button>
        <Check label="mit nicht ausgeglichenem Deputat" checked box="size-2.5" className="mt-[11px] ml-2" textClass="ml-[3px]" />
        <div className="mt-1.5 ml-2 flex items-center">
          <Check label="im Vorjahr in Klasse" box="size-2.5" textClass="ml-[3px]" />
          <Combo label="Klasse" className="mr-2 ml-2 w-[51px]" />
          tätig
        </div>
        <Check
          label={<>ausgewählte LK im Infofenster beibehalten,<br />wenn UE in der Matrix/Liste gewechselt wird</>}
          box="size-2.5"
          className="mt-2.5 mb-4 ml-2 leading-[11px]"
          textClass="ml-[3px]"
        />
        <TeacherTable />
        <p className="border-b border-[#dcdce6] text-center">Anzahl: 6</p>
        <div className="flex items-center justify-center border-b border-[#dcdce6] py-1">
          <ToolIcons items="first rewind prev next forward last refresh" />
          <button type="button" className="ml-0.5">Übernehmen</button>
        </div>
      </div>
    </div>
  </section>
);

/* ---------- Annotations ---------- */

const Annotations = () => (
  <div className="pointer-events-none absolute inset-0 font-['Liberation_Sans',sans-serif] text-2xl leading-none font-bold text-[#ff0000]">
    <div className="absolute top-[95px] left-[805px] h-[29px] w-[25px] border-3 border-[#ff0000]" />
    <div className="absolute top-[581px] left-[400px] h-[29px] w-[143px] border-3 border-[#ff0000]" />
    <div className="absolute top-[384px] left-[864px] h-[79px] w-[222px] border-3 border-[#ff0000]" />
    <svg className="absolute inset-0 size-full" fill="none" stroke="#ff0000" strokeWidth="3">
      <path d="M806 123L697 157M706 148l-10 9 13 3" />
      <path d="M542 583l69-71M599 515l13-4-4 13" />
      <path d="M531.500 597.500v14.500l3.500-3.500 2.500 5.500 2-1-2.500-5h5z" fill="#fff" stroke="#222" strokeWidth="1" />
    </svg>
    <span className="absolute top-[137px] left-[802px]">1</span>
    <span className="absolute top-[518px] left-[629px]">2</span>
    <span className="absolute top-[362px] left-[962px]">3</span>
  </div>
);

export default function App() {
  return (
    <main className="relative min-h-screen overflow-hidden bg-white font-['Open_Sans','Noto_Sans',sans-serif] text-[9px] leading-[14px] text-[#111]">
      <div className="absolute top-[9px] right-[85px] left-[5px] h-[616px] overflow-hidden bg-linear-to-b from-[#4aa3e8] from-0% to-[#7cc0ee] to-25%">
        <MainWindow />
        <MatrixWindow />
        <ContextMenu />
      </div>
      <InfoWindow />
      <Annotations />
    </main>
  );
}
